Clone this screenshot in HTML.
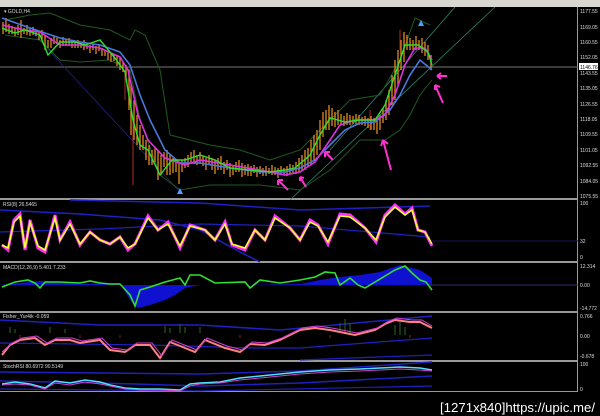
<!DOCTYPE html>
<html><head><meta charset="utf-8"><style>
html,body{margin:0;padding:0;background:#000;width:600px;height:416px;overflow:hidden}
svg{display:block}
text{font-family:"Liberation Sans",sans-serif}
</style></head><body>
<svg width="600" height="416" viewBox="0 0 600 416" xmlns="http://www.w3.org/2000/svg">
<rect width="600" height="416" fill="#000"/>
<rect x="0" y="0" width="600" height="7" fill="#d8d8d0"/>
<g fill="#9a9a9a">
<rect x="0" y="198" width="578" height="2"/>
<rect x="0" y="261" width="578" height="2"/>
<rect x="0" y="311" width="578" height="2"/>
<rect x="0" y="360" width="578" height="2"/>
<rect x="0" y="391" width="578" height="1"/>
<rect x="577" y="7" width="1" height="385"/>
</g>
<line x1="0" y1="67" x2="578" y2="67" stroke="#777" stroke-width="1"/>
<line x1="290" y1="200" x2="495" y2="7" stroke="#2a8a6a" stroke-width="0.8"/>
<line x1="330" y1="150" x2="455" y2="7" stroke="#2a8a6a" stroke-width="0.8"/>
<line x1="30" y1="30" x2="180" y2="192" stroke="#22228a" stroke-width="0.8"/>
<g fill="none" stroke="#1f5a1f" stroke-width="1">
<polyline points="5,20 30,15 50,13 80,25 110,30 130,40 135,30 145,35 160,70 170,135 190,140 210,145 240,150 270,160 300,150 330,120 350,100 380,95 400,60 415,18 430,25"/>
<polyline points="5,35 40,40 60,60 80,62 110,60 130,70 140,120 160,175 180,190 210,185 260,185 300,190 330,170 360,140 385,140 400,130 410,115 420,95 432,80"/>
</g>
<g stroke="#e08a20" stroke-width="1.3">
<path d="M3,22v12M6,18v14M9,24v10M12,26v8M15,28v8M18,25v10M21,20v18M24,28v6M27,25v10M30,28v8M33,27v8M36,30v6M39,32v8M42,30v10M45,35v15M48,40v8M51,38v10M54,36v8M57,38v6M60,40v8M63,37v9M66,40v6M69,38v8M72,40v8M75,42v6M78,40v8M81,42v6M84,40v10M87,43v6M90,45v8M93,44v6M96,46v8M99,45v6M102,48v8M105,50v6M108,52v8M111,54v8M114,55v6M117,56v10M120,58v12M123,62v10M126,65v12M129,70v40M131,85v50M134,100v40M137,115v30M140,125v25M143,135v15M146,140v20M149,145v20M152,150v15M155,148v14M158,150v30M161,155v20M164,152v15M167,150v25M170,155v20M173,158v15M176,160v12M179,162v22M182,160v12M185,158v10M188,155v12M191,152v10M194,150v14M197,155v10M200,152v12M203,156v10M206,158v12M209,155v10M212,158v12M215,160v14M218,158v12M221,156v14M224,162v12M227,160v10M230,163v14M233,165v10M236,162v10M239,160v12M242,163v14M245,165v10M248,164v12M251,166v10M254,165v8M257,167v10M260,166v8M263,168v8M266,166v10M269,168v6M272,165v10M275,167v8M278,168v10M281,166v8M284,168v6M287,166v10M290,164v10M293,165v8M296,162v12M299,158v14M302,155v15M305,150v20M308,148v18M311,140v25M314,135v25M317,130v25M320,120v30M323,112v25M326,110v20M329,105v25M332,108v18M335,112v15M338,110v15M341,114v10M344,116v10M347,113v12M350,115v10M353,116v8M356,114v10M359,115v10M362,117v8M365,116v10M368,118v10M371,116v14M374,118v12M377,120v14M380,115v15M383,108v15M386,100v20M389,90v25M392,75v30M395,60v40M398,50v35M401,40v30M404,32v30M407,35v15M410,38v12M413,40v10M416,36v14M419,40v10M422,38v15M425,42v14M428,45v15M431,55v15"/>
</g>
<g stroke="#b03020" stroke-width="1"><path d="M133,120v65M125,70v30M400,30v20M370,110v20"/></g>
<polyline fill="none" stroke="#4a78e0" stroke-width="1.6" points="2,18 30,28 60,38 80,42 100,45 120,52 130,65 140,95 150,120 165,150 180,163 200,163 230,168 260,172 285,172 300,168 315,160 330,145 345,130 360,123 375,122 390,110 400,95 410,75 420,60 432,70"/>
<polyline fill="none" stroke="#e030e0" stroke-width="1.6" points="2,25 25,30 40,32 60,45 80,45 100,48 120,57 128,70 138,115 148,140 165,158 185,165 200,160 230,165 260,170 285,175 300,172 315,162 330,140 340,125 355,120 375,120 385,115 395,95 405,65 415,48 425,48 432,60"/>
<polyline fill="none" stroke="#30e030" stroke-width="1.4" points="2,28 15,33 25,30 40,35 48,55 60,42 75,42 85,45 100,40 115,58 125,72 133,120 140,145 148,150 160,175 172,160 185,160 200,155 215,160 230,168 250,170 270,172 285,170 295,168 310,155 320,135 330,118 345,122 360,120 375,120 385,105 395,75 405,45 418,45 428,52 432,65"/>
<g stroke="#ff30d0" stroke-width="2" fill="none">
<path d="M288,190l-10,-10M278,180l5,0M278,180l0,5"/>
<path d="M306,187l-6,-10M300,177l4,1M300,177l0,4"/>
<path d="M333,160l-8,-8M325,152l5,0M325,152l0,5"/>
<path d="M391,170l-8,-30M383,140l-2,6M383,140l5,4"/>
<path d="M443,103l-8,-18M435,85l0,5M435,85l5,2"/>
<path d="M447,76h-10M437,76l4,-3M437,76l4,3"/>
</g>
<g fill="#4aa0ff"><path d="M421,20l-3,6h6zM180,188l-3,6h6z"/></g>
<text x="4" y="13" fill="#ddd" font-size="5">▾ GOLD,H4</text>
<g fill="#ddd" font-size="5">
<text x="580" y="13">1177.55</text><text x="580" y="29">1169.05</text><text x="580" y="44">1160.55</text><text x="580" y="59">1152.05</text><text x="580" y="75">1143.55</text><text x="580" y="90">1135.05</text><text x="580" y="106">1126.55</text><text x="580" y="121">1118.05</text><text x="580" y="136">1109.55</text><text x="580" y="152">1101.05</text><text x="580" y="167">1092.55</text><text x="580" y="183">1084.05</text><text x="580" y="198">1075.55</text>
</g>
<rect x="579" y="63" width="19" height="7" fill="#fff"/><text x="580" y="69" font-size="5" fill="#000">1146.76</text>
<text x="3" y="206" fill="#ddd" font-size="5">RSI(8) 26.5465</text>
<polyline fill="none" stroke="#2020c0" stroke-width="1.5" points="0,210 80,214 160,220 200,230 240,252 260,262"/>
<polyline fill="none" stroke="#2020c0" stroke-width="1.5" points="70,200 200,203 300,210 430,206"/>
<polyline fill="none" stroke="#2020c0" stroke-width="1.2" points="0,232 100,229 200,224 300,226 430,237"/>
<line x1="430" y1="241" x2="578" y2="241" stroke="#15155a"/>
<polyline fill="none" stroke="#ff30ff" stroke-width="3" points="2,245 8,250 14,220 20,214 25,250 30,220 38,248 45,252 55,215 60,240 70,222 80,245 90,232 100,240 110,244 120,237 128,250 135,244 148,216 158,230 168,222 180,248 190,225 205,230 215,240 225,222 232,245 245,250 255,230 265,240 275,216 290,228 300,240 310,220 318,225 328,244 340,214 350,215 365,228 376,242 385,215 395,205 405,214 412,208 418,230 425,232 432,246"/>
<polyline fill="none" stroke="#ffff30" stroke-width="1.6" points="2,245 8,248 14,222 20,216 25,248 30,222 38,246 45,250 55,218 60,240 70,224 80,244 90,232 100,240 110,244 120,237 128,248 135,244 148,218 158,230 168,224 180,246 190,226 205,230 215,240 225,224 232,244 245,248 255,230 265,240 275,218 290,228 300,240 310,222 318,226 328,242 340,216 350,217 365,228 376,240 385,217 395,207 405,215 412,210 418,230 425,232 432,244"/>
<g fill="#ddd" font-size="5"><text x="580" y="205">100</text><text x="580" y="243">32</text><text x="580" y="259">0</text></g>
<text x="3" y="269" fill="#ddd" font-size="5">MACD(12,26,9) 5.401 7.233</text>
<path d="M0,285 L40,281 L80,284 L120,283 L130,300 L138,308 L150,305 L165,300 L175,295 L185,288 L200,285 L240,285 L300,284 L320,280 L340,277 L360,275 L380,272 L400,265 L420,270 L432,278 L432,285 Z" fill="#1010d0"/>
<line x1="430" y1="285" x2="578" y2="285" stroke="#3a2a6a"/>
<polyline fill="none" stroke="#30e030" stroke-width="1.6" points="2,287 15,282 28,280 35,283 40,288 45,282 60,282 80,283 90,281 100,283 110,284 120,284 130,295 135,306 140,290 150,287 165,282 180,278 185,285 190,275 200,275 215,283 245,282 250,288 260,280 280,283 300,280 315,277 325,272 335,273 340,285 350,278 358,285 365,288 375,282 385,276 395,270 405,266 412,273 420,280 426,282 432,290"/>
<g fill="#ddd" font-size="5"><text x="580" y="268">12.314</text><text x="580" y="287">0.00</text><text x="580" y="310">-14.772</text></g>
<text x="3" y="318" fill="#ddd" font-size="5">Fisher_Yur4ik -0.059</text>
<polyline fill="none" stroke="#2020c0" stroke-width="1.5" points="0,320 100,325 200,325 280,330 432,316"/>
<polyline fill="none" stroke="#2020c0" stroke-width="1.2" points="0,343 150,345 250,348 300,348 432,338"/>
<polyline fill="none" stroke="#2020c0" stroke-width="1.2" points="300,360 432,355"/>
<g stroke="#2a6a20" stroke-width="1"><path d="M10,333v-6M15,333v-4M50,333v-6M65,333v-4M165,333v-7M170,333v-5M180,333v-9M185,333v-6M200,333v-6M340,333v-10M345,333v-14M350,333v-10M395,335v-10M400,335v-14M405,335v-8"/></g>
<g stroke="#8a2020" stroke-width="1"><path d="M20,335v3M80,335v3M120,335v3M240,335v3M330,335v3M410,335v3"/></g>
<polyline fill="none" stroke="#ff8080" stroke-width="2" points="2,355 10,345 20,340 35,338 45,345 55,340 70,340 80,343 100,340 110,350 125,352 135,345 150,345 160,358 170,342 185,348 195,352 205,340 225,348 240,352 250,344 265,345 280,340 300,330 315,328 330,330 345,333 355,335 375,330 385,324 395,320 410,322 420,322 432,328"/>
<polyline fill="none" stroke="#d040d0" stroke-width="1" points="2,352 12,343 22,338 37,336 47,343 57,338 72,338 82,341 102,338 112,348 127,350 137,343 152,343 162,356 172,340 187,346 197,350 207,338 227,346 242,350 252,342 267,343 282,338 302,328 317,326 332,328 347,331 357,333 377,328 387,322 397,318 412,320 422,320 432,326"/>
<g fill="#ddd" font-size="5"><text x="580" y="318">0.766</text><text x="580" y="338">0.00</text><text x="580" y="358">-0.678</text></g>
<text x="3" y="368" fill="#ddd" font-size="5">StochRSI 80.6972 90.5149</text>
<polyline fill="none" stroke="#2020c0" stroke-width="1.5" points="0,372 200,374 300,371 432,362"/>
<polyline fill="none" stroke="#2020c0" stroke-width="1.5" points="0,381 100,383 200,386 300,383 432,376"/>
<polyline fill="none" stroke="#2020c0" stroke-width="1.2" points="0,389 200,391 432,386"/>
<polyline fill="none" stroke="#50e0ff" stroke-width="1.5" points="2,384 15,382 30,384 45,388 55,381 70,383 85,380 100,382 110,385 125,388 140,389 160,389 180,390 190,384 200,383 220,382 240,378 260,376 280,374 300,372 330,370 360,369 380,368 400,367 420,368 432,370"/>
<polyline fill="none" stroke="#d040d0" stroke-width="1" points="2,385 15,384 30,385 45,389 55,383 70,385 85,382 100,384 110,386 125,389 140,390 160,390 180,391 190,386 200,384 220,383 240,380 260,378 280,376 300,374 330,372 360,371 380,370 400,369 420,370 432,371"/>
<g fill="#ddd" font-size="5"><text x="580" y="366">100</text><text x="580" y="391">0</text></g>
<text x="440" y="412" fill="#fff" font-size="13" textLength="155" lengthAdjust="spacingAndGlyphs">[1271x840]https://upic.me/</text>
</svg>
</body></html>
